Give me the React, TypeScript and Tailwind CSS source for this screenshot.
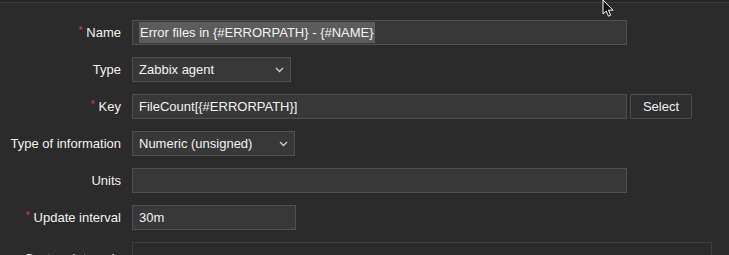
import React from 'react';

function Chevron() {
  return (
    <svg width="9" height="6" viewBox="0 0 9 6" className="shrink-0">
      <path d="M1 1l3.5 3.5L8 1" fill="none" stroke="#cfcfcf" strokeWidth="1.3" />
    </svg>
  );
}

function Label({ text, required }: { text: string; required?: boolean }) {
  return (
    <div className="flex h-[25px] items-center justify-end whitespace-nowrap">
      {required && <span className="mr-[4px] -mt-[5px] text-[10px] text-[#e33734]">*</span>}
      <span>{text}</span>
    </div>
  );
}

function Input({ value, width, children }: { value?: string; width: string; children?: React.ReactNode }) {
  return (
    <div className={`flex h-[25px] items-center border border-[#4f4f4f] bg-[#383838] px-[6px] ${width}`}>
      {children ?? value}
    </div>
  );
}

function Select({ value, width }: { value: string; width: string }) {
  return (
    <div className={`flex h-[25px] items-center justify-between border border-[#4f4f4f] bg-[#383838] pl-[6px] pr-[6px] ${width}`}>
      <span>{value}</span>
      <Chevron />
    </div>
  );
}

export default function App() {
  return (
    <div
      className="relative h-[255px] w-[729px] overflow-hidden bg-[#2b2b2b] text-[13px] text-[#f2f2f2]"
      style={{ fontFamily: '"Liberation Sans", Arial, sans-serif' }}
    >
      <div className="h-[2px] bg-[#262626]" />
      <div className="h-[1px] bg-[#3a3a3a]" />

      <div className="grid grid-cols-[121px_1fr] gap-x-[11px] gap-y-[12px] pt-[17px]">
        <Label text="Name" required />
        <Input width="w-[495px]">
          <span className="bg-[#5c5c5c] px-[1px] py-[1px]">Error files in {'{#ERRORPATH}'} - {'{#NAME}'}</span>
        </Input>

        <Label text="Type" />
        <Select value="Zabbix agent" width="w-[159px]" />

        <Label text="Key" required />
        <div className="flex gap-[3px]">
          <Input value="FileCount[{#ERRORPATH}]" width="w-[495px]" />
          <div className="flex h-[25px] w-[62px] items-center justify-center rounded-[2px] border border-[#4f4f4f] bg-[#2e2e2e]">
            Select
          </div>
        </div>

        <Label text="Type of information" />
        <Select value="Numeric (unsigned)" width="w-[163px]" />

        <Label text="Units" />
        <Input width="w-[495px]" />

        <Label text="Update interval" required />
        <Input value="30m" width="w-[164px]" />

        <div className="flex h-[25px] items-start justify-end pt-[7px] whitespace-nowrap">Custom intervals</div>
        <div className="h-[40px] w-[580px] border border-[#3f3f3f]">
          <div className="grid grid-cols-[167px_173px_175px_1fr] px-[5px] pt-[7px] text-[#8c8c8c]">
            <span>Type</span>
            <span>Interval</span>
            <span>Period</span>
            <span>Action</span>
          </div>
        </div>
      </div>

      <svg className="absolute left-[602px] top-0" width="14" height="18" viewBox="0 0 14 18">
        <path d="M1 0v14l3.2-3 2.3 5.2 2.2-1-2.3-5H11L1 0z" fill="#111" stroke="#f5f5f5" strokeWidth="1" />
      </svg>
    </div>
  );
}
